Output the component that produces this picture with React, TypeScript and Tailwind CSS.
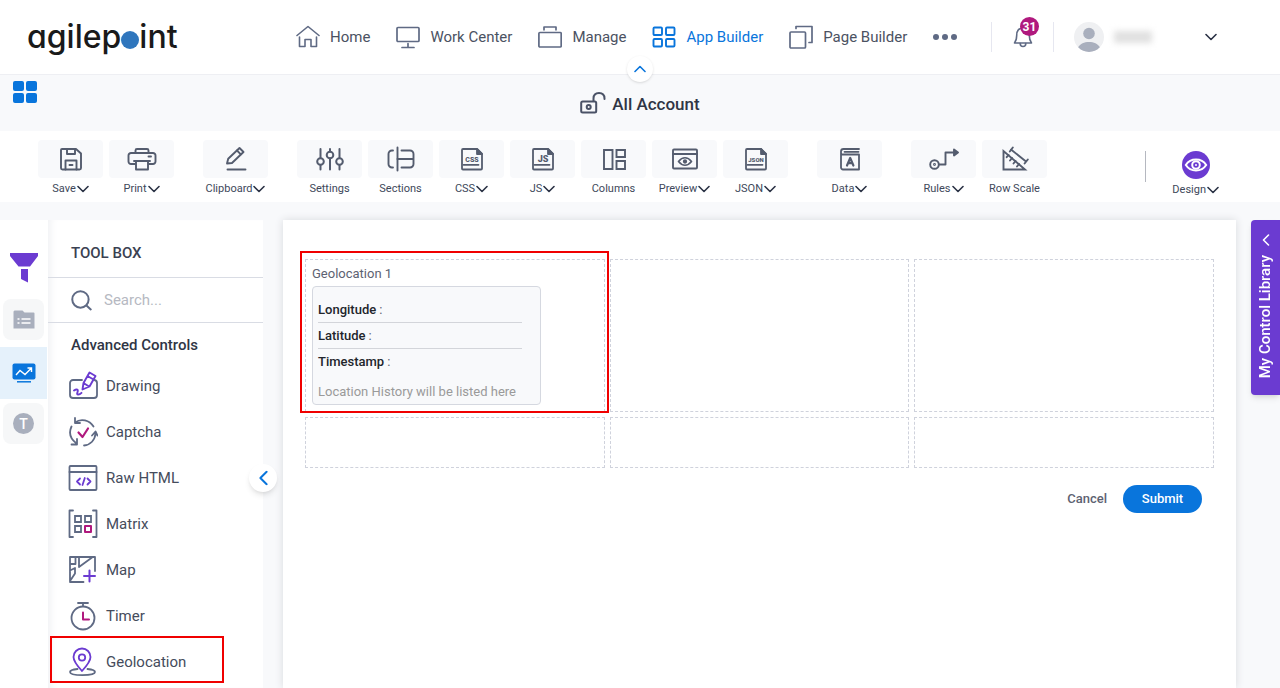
import React from 'react';

interface IconProps {
  className?: string;
}

interface ToolItem {
  label: string;
  icon: React.FC<IconProps>;
  menu?: boolean;
}

interface ControlItem {
  label: string;
  icon: React.FC<IconProps>;
  highlighted?: boolean;
}

const PURPLE = '#6b3bd1';
const PINK = '#b0197e';

// Base wrapper shared by all line icons
const Svg: React.FC<{ size: string; className?: string; width?: number; children: React.ReactNode }> = ({
  size,
  className,
  width = 1.8,
  children,
}) => (
  <svg
    viewBox={size}
    className={className}
    fill="none"
    stroke="currentColor"
    strokeWidth={width}
    strokeLinecap="round"
    strokeLinejoin="round"
    aria-hidden="true"
  >
    {children}
  </svg>
);

/* ---------- Navigation icons ---------- */

const HomeIcon = () => (
  <Svg size="0 0 24 24" className="size-6" width={1.6}>
    <path d="M1 10.5 12 1.5l11 9" />
    <path d="M3.500 12v9.500h5.500v-7h6v7h5.500V12" />
  </Svg>
);

const MonitorIcon = () => (
  <Svg size="0 0 24 24" className="size-6" width={1.7}>
    <rect x="1" y="2.500" width="22" height="14" rx="1" />
    <path d="M12 18.500v4M6 22.500h12" />
  </Svg>
);

const BriefcaseIcon = () => (
  <Svg size="0 0 24 24" className="size-6" width={1.7}>
    <rect x="0.900" y="7.500" width="22.300" height="14.500" rx="1" />
    <path d="M6 4.800V2h12v2.800" />
  </Svg>
);

const AppsIcon = () => (
  <Svg size="0 0 24 24" className="size-6" width={1.9}>
    <rect x="1.500" y="2.500" width="8.500" height="7.500" rx="1" />
    <rect x="14" y="2.500" width="8.500" height="7.500" rx="1" />
    <rect x="1.500" y="14" width="8.500" height="7.500" rx="1" />
    <rect x="14" y="14" width="8.500" height="7.500" rx="1" />
  </Svg>
);

const PagesIcon = () => (
  <Svg size="0 0 24 24" className="size-6" width={1.7}>
    <rect x="1" y="7" width="15.500" height="16" rx="1" />
    <path d="M7 3.500V1.500h16v16h-3" />
  </Svg>
);

const BellIcon = () => (
  <Svg size="0 0 20 22" className="h-[22px] w-5" width={1.6}>
    <path d="M1.500 17h17c-1.600-2-2.200-4-2.200-7.500 0-4.500-2.300-7.500-6.300-7.500S3.700 5 3.700 9.500C3.700 13 3.100 15 1.500 17Z" />
    <path d="M7.200 17.500c0 1.800 1.200 3 2.800 3s2.800-1.200 2.800-3" />
  </Svg>
);

const AvatarIcon = () => (
  <svg viewBox="0 0 30 30" className="size-[30px] rounded-full" aria-hidden="true">
    <rect width="30" height="30" fill="#eff0f2" />
    <circle cx="15" cy="11.500" r="5.800" fill="#a9afbd" />
    <path d="M4 25.500C6.500 21.500 10 20 15 20s8.500 1.500 11 5.500L22 30H8Z" fill="#a9afbd" />
  </svg>
);

const Chevron: React.FC<IconProps> = ({ className }) => (
  <Svg size="0 0 12 8" className={className} width={1.6}>
    <path d="m1 1.500 5 5 5-5" />
  </Svg>
);

const UnlockIcon = () => (
  <Svg size="0 0 26 22" className="h-[22px] w-[26px] text-[#4a5266]" width={2}>
    <rect x="1.200" y="9.500" width="15" height="11" rx="1.500" />
    <circle cx="8.700" cy="15" r="2" />
    <path d="M13.500 9V6.500c0-3.500 2.300-5.500 5.500-5.500s5.500 2 5.500 5.500V7" />
  </Svg>
);

/* ---------- Toolbar icons ---------- */

const SaveIcon = () => (
  <Svg size="0 0 26 26" className="size-[26px]" width={1.9}>
    <path d="M4 3h14l5 4.500V22a1.500 1.500 0 0 1-1.500 1.500h-17A1.500 1.500 0 0 1 3 22V4a1 1 0 0 1 1-1Z" />
    <path d="M9 3v5h8V3M7.500 23.500V14.500h11v9M11.500 19h3" />
  </Svg>
);

const PrintIcon = () => (
  <Svg size="0 0 30 26" className="h-[26px] w-[30px]" width={1.9}>
    <path d="M8.500 7V4.500A1.500 1.500 0 0 1 10 3h10a1.500 1.500 0 0 1 1.500 1.500V7" />
    <path d="M8 18H4a2.500 2.500 0 0 1-2.500-2.500v-6A2.500 2.500 0 0 1 4 7h22a2.500 2.500 0 0 1 2.500 2.500v6A2.500 2.500 0 0 1 26 18h-4" />
    <path d="M7 15h16M9 15v8.500h12V15M21.500 10.500H24" />
  </Svg>
);

const ClipboardIcon = () => (
  <Svg size="0 0 26 26" className="size-[26px]" width={1.9}>
    <path d="m4 17.500 1.200-4.700L16.500 2l4 4L9 17Z" />
    <path d="m14 4.500 3.800 3.800M4.500 23.500h18" />
  </Svg>
);

const SettingsIcon = () => (
  <Svg size="0 0 28 26" className="h-[26px] w-7" width={2}>
    <path d="M4.500 3v9M4.500 19v4.500M14 3v2.500M14 12.500v11M23.500 3v9M23.500 19v4.500" />
    <circle cx="4.500" cy="15.500" r="3.300" />
    <circle cx="14" cy="9" r="3.300" />
    <circle cx="23.500" cy="15.500" r="3.300" />
  </Svg>
);

const SectionsIcon = () => (
  <Svg size="0 0 28 26" className="h-[26px] w-7" width={1.9}>
    <path d="M10.500 1.500v23M6 4.500H5A3.500 3.500 0 0 0 1.500 8v10A3.500 3.500 0 0 0 5 21.500h1" />
    <path d="M14.500 4.500H23A3.500 3.500 0 0 1 26.500 8v10a3.500 3.500 0 0 1-3.500 3.500h-8.500M10.500 13h16" />
  </Svg>
);

const FileShape: React.FC<{ text: string; fontSize: number }> = ({ text, fontSize }) => (
  <Svg size="0 0 26 26" className="size-[26px]" width={1.8}>
    <path d="M4 3h14l5 5v14.500a1 1 0 0 1-1 1H4a1 1 0 0 1-1-1V4a1 1 0 0 1 1-1Z" />
    <path d="M18 3v5h5Z" fill="currentColor" />
    <path d="M4.500 18.800h15" />
    <text
      x="13"
      y="15.500"
      textAnchor="middle"
      fontSize={fontSize}
      fontFamily="Roboto, sans-serif"
      fontWeight="900"
      fill="currentColor"
      stroke="none"
    >
      {text}
    </text>
  </Svg>
);

const CssIcon = () => <FileShape text="CSS" fontSize={7} />;
const JsIcon = () => <FileShape text="JS" fontSize={9} />;
const JsonIcon = () => <FileShape text="JSON" fontSize={6} />;

const ColumnsIcon = () => (
  <Svg size="0 0 26 26" className="size-[26px]" width={1.9}>
    <path d="M3 4h8.500v19H3ZM15.500 4H24v7h-8.500ZM15.500 15H24v8h-8.500Z" strokeLinejoin="miter" />
  </Svg>
);

const PreviewIcon = () => (
  <Svg size="0 0 28 26" className="h-[26px] w-7" width={1.9}>
    <rect x="2" y="3.500" width="24" height="19" rx="1" />
    <path d="M2 8h24" />
    <path d="M7.500 15.500c4-5 9-5 13 0-4 5-9 5-13 0Z" strokeWidth="1.700" />
    <circle cx="14" cy="15.500" r="1.200" fill="currentColor" />
  </Svg>
);

const DataIcon = () => (
  <Svg size="0 0 26 26" className="size-[26px]" width={1.8}>
    <path d="M22 8.500v15H6A2 2 0 0 1 4 21.500V5.500A2.500 2.500 0 0 1 6.500 3H22M5 8.500h17M7.500 5.800h14" />
    <path d="m10 19.500 3.200-7.500 3.200 7.500M11.200 17.200h4" strokeWidth="2.200" />
  </Svg>
);

const RulesIcon = () => (
  <Svg size="0 0 30 26" className="h-[26px] w-[30px]" width={1.9}>
    <circle cx="5.500" cy="18.500" r="4.300" />
    <circle cx="5.500" cy="18.500" r="0.500" />
    <path d="M10 18.500h6.500V6.500H24" />
    <path d="m25 3.500 4 3-4 3Z" fill="currentColor" />
  </Svg>
);

const RowScaleIcon = () => (
  <Svg size="0 0 28 26" className="h-[26px] w-7" width={1.9}>
    <path d="M2.500 5v18.500H24Z" strokeLinejoin="miter" />
    <path d="m7.500 9-1.800 2.200M11 12l-2 2.500M14.500 15l-2 2.500M18 18l-2 2.500" />
    <path d="m10 3.500 15 12M11.800 1.500l-3 4M26.800 13.500l-3.200 4" />
  </Svg>
);

const DesignIcon = () => (
  <svg viewBox="0 0 28 28" className="size-7" aria-hidden="true" fill="none">
    <circle cx="14" cy="14" r="14" fill={PURPLE} />
    <path d="M3.800 14C8.500 6.800 19.500 6.800 24.200 14 19.500 21.200 8.500 21.200 3.800 14Z" stroke="#fff" strokeWidth="2" />
    <circle cx="14" cy="14" r="3.800" stroke="#fff" strokeWidth="2" />
    <circle cx="14" cy="14" r="1" fill="#fff" />
  </svg>
);

/* ---------- Tool box icons ---------- */

const DrawingIcon = () => (
  <Svg size="0 0 30 30" className="size-[30px]">
    <path d="M14 9H5a3 3 0 0 0-3 3v12a3 3 0 0 0 3 3h21a3 3 0 0 0 3-3V12a3 3 0 0 0-2.500-3" />
    <g stroke={PURPLE} strokeWidth="1.900">
      <path d="m14.500 18.500 1-6.500L21.500 1.500l6 3.500-6 10.500ZM15.500 12l5.500 3.500M19.500 5l6 3.500" />
      <path d="M6 19.500c2-1.500 4-1.500 3.800.5-.2 1.800-1.500 3 .2 3.500 1.500.3 2.500-.7 3.500-1.700" />
    </g>
  </Svg>
);

const CaptchaIcon = () => (
  <Svg size="0 0 30 30" className="size-[30px]">
    <path d="M7 5.500C13 1 21.500 3 25.500 9.500M7 1v5h5" />
    <path d="M3.500 9.500C.5 16 2.500 22 8.500 26.500M9 22v5.500H3.500" />
    <path d="M16 28.500c6.500-.5 11-5.500 11.500-12M24 18.500l3.500-4 2 4" />
    <path d="m10.500 15.500 4 4.500 5.500-8.500" stroke={PINK} strokeWidth="2.200" />
  </Svg>
);

const HtmlIcon = () => (
  <Svg size="0 0 30 30" className="size-[30px]">
    <rect x="1.500" y="3" width="27" height="24" rx="1" />
    <path d="M1.500 9h27" />
    <path d="m12 15.500-3 3 3 3M19.500 15.500l3 3-3 3M16.800 15l-2.300 7" stroke={PURPLE} />
  </Svg>
);

const MatrixIcon = () => (
  <Svg size="0 0 30 30" className="size-[30px]">
    <path d="M5 1.500H1.500v26.500H5M25 1.500h3.500v26.500H25" />
    <path d="M7 7h6v6H7ZM17 7h6v6h-6ZM7 17h6v6H7Z" strokeLinejoin="miter" />
    <path d="M17 17h6v6h-6Z" stroke={PINK} strokeWidth="2" />
  </Svg>
);

const MapIcon = () => (
  <Svg size="0 0 30 30" className="size-[30px]">
    <path d="M15.500 27H2V2h25v14M2 9h5.500V2M2 15.500l5-2.500v5.500L2 26M11 2v10L24 2.500" />
    <path d="M21.500 15.500v11M16 21h11" stroke={PURPLE} strokeWidth="2" />
  </Svg>
);

const TimerIcon = () => (
  <Svg size="0 0 30 30" className="size-[30px]">
    <circle cx="15" cy="17" r="11.500" />
    <path d="M10 2h10M15 2v3" />
    <path d="M15 11.500V18.500h6" stroke={PINK} strokeWidth="2" />
  </Svg>
);

const GeoIcon = () => (
  <Svg size="0 0 30 30" className="size-[30px]">
    <path d="M9.500 22C4.500 22.500 2 23.500 2 25c0 2 5 3.200 12.500 3.200S27 27 27 25c0-1.500-2.500-2.500-7.500-3" />
    <g stroke={PURPLE}>
      <path d="M14 24C8.500 18 5.500 14 5.500 10a8.500 8.500 0 0 1 17 0c0 4-3 8-8.500 14Z" />
      <circle cx="14" cy="10.500" r="3.200" />
    </g>
  </Svg>
);

/* ---------- Data ---------- */

const NAV_ITEMS = [
  { label: 'Home', icon: HomeIcon },
  { label: 'Work Center', icon: MonitorIcon },
  { label: 'Manage', icon: BriefcaseIcon },
  { label: 'App Builder', icon: AppsIcon, active: true },
  { label: 'Page Builder', icon: PagesIcon },
];

const TOOL_GROUPS: ToolItem[][] = [
  [
    { label: 'Save', icon: SaveIcon, menu: true },
    { label: 'Print', icon: PrintIcon, menu: true },
  ],
  [{ label: 'Clipboard', icon: ClipboardIcon, menu: true }],
  [
    { label: 'Settings', icon: SettingsIcon },
    { label: 'Sections', icon: SectionsIcon },
    { label: 'CSS', icon: CssIcon, menu: true },
    { label: 'JS', icon: JsIcon, menu: true },
    { label: 'Columns', icon: ColumnsIcon },
    { label: 'Preview', icon: PreviewIcon, menu: true },
    { label: 'JSON', icon: JsonIcon, menu: true },
  ],
  [{ label: 'Data', icon: DataIcon, menu: true }],
  [
    { label: 'Rules', icon: RulesIcon, menu: true },
    { label: 'Row Scale', icon: RowScaleIcon },
  ],
];

const CONTROLS: ControlItem[] = [
  { label: 'Drawing', icon: DrawingIcon },
  { label: 'Captcha', icon: CaptchaIcon },
  { label: 'Raw HTML', icon: HtmlIcon },
  { label: 'Matrix', icon: MatrixIcon },
  { label: 'Map', icon: MapIcon },
  { label: 'Timer', icon: TimerIcon },
  { label: 'Geolocation', icon: GeoIcon, highlighted: true },
];

const GEO_FIELDS = ['Longitude', 'Latitude', 'Timestamp'];

/* ---------- Sections ---------- */

const Header = () => (
  <header className="relative flex h-[75px] shrink-0 items-center border-b border-[#eeeff3] bg-white pr-[63px] pl-[27px]">
    <a
      href="#"
      className="flex w-[269px] shrink-0 items-center font-[Inter,sans-serif] text-[32px] leading-10 font-medium text-[#1a1a1a] [font-feature-settings:'cv11']"
    >
      agilep
      <span className="mt-[6px] size-[18px] rounded-full bg-[#2f76bd]" />
      int
    </a>
    <nav className="flex items-center gap-[26px]">
      {NAV_ITEMS.map((item) => (
        <a
          key={item.label}
          href="#"
          className={`flex items-center gap-[10px] whitespace-nowrap ${item.active ? 'text-[#0975dc]' : 'text-[#5f6a84]'}`}
        >
          <item.icon />
          <span className={item.active ? '' : 'text-[#4b5262]'}>{item.label}</span>
        </a>
      ))}
      <button aria-label="More" className="flex gap-[3px] text-[#5f6a84]">
        <span className="size-[6px] rounded-full bg-current" />
        <span className="size-[6px] rounded-full bg-current" />
        <span className="size-[6px] rounded-full bg-current" />
      </button>
    </nav>
    <div className="ml-auto flex items-center">
      <button
        aria-label="Notifications"
        className="relative flex h-[30px] w-[63px] items-center justify-center border-x border-[#e6e7f0] text-[#5f6a84]"
      >
        <BellIcon />
        <span className="absolute -top-[5px] left-7 flex size-[19px] items-center justify-center rounded-full bg-[#b0197e] text-xs font-bold text-white">
          31
        </span>
      </button>
      <button aria-label="Account menu" className="ml-5 flex items-center text-[#2b3245]">
        <AvatarIcon />
        <span className="ml-[10px] h-3 w-[38px] bg-[#e0e0e0] blur-[3px]" />
        <Chevron className="ml-[53px] h-2 w-3" />
      </button>
    </div>
    <button
      aria-label="Collapse header"
      className="absolute -bottom-2 left-1/2 z-10 flex size-[26px] -translate-x-1/2 items-center justify-center rounded-full bg-white text-[#0975dc] shadow-sm"
    >
      <Chevron className="h-2 w-3 rotate-180" />
    </button>
  </header>
);

const TitleBar = () => (
  <div className="grid h-14 shrink-0 grid-cols-3 px-[13px]">
    <button aria-label="Applications" className="mt-[6px] grid w-6 grid-cols-2 gap-[2px] self-start">
      <span className="h-[10px] rounded-xs bg-[#0975dc]" />
      <span className="h-[10px] rounded-xs bg-[#0975dc]" />
      <span className="h-[10px] rounded-xs bg-[#0975dc]" />
      <span className="h-[10px] rounded-xs bg-[#0975dc]" />
    </button>
    <h1 className="flex items-center justify-center gap-[6px] text-[17px] font-medium text-[#2f3545]">
      <UnlockIcon />
      <span className="pt-1">All Account</span>
    </h1>
  </div>
);

const ToolLabel: React.FC<{ label: string; menu?: boolean }> = ({ label, menu }) => (
  <span className="flex items-center gap-px text-[11px] leading-4 whitespace-nowrap text-[#40485a]">
    {label}
    {menu && <Chevron className="h-2 w-3 text-[#2b3245]" />}
  </span>
);

const Toolbar = () => (
  <div className="flex h-[71px] shrink-0 items-start bg-white pt-[9px] pr-[61px] pl-[38px]">
    <div className="flex gap-[29px]">
      {TOOL_GROUPS.map((group) => (
        <div key={group[0].label} className="flex gap-[6px]">
          {group.map((tool) => (
            <button key={tool.label} className="flex w-[65px] flex-col items-center gap-[3px]">
              <span className="flex h-[38px] w-full items-center justify-center rounded bg-[#f8f9fb] text-[#545c6e]">
                <tool.icon />
              </span>
              <ToolLabel label={tool.label} menu={tool.menu} />
            </button>
          ))}
        </div>
      ))}
    </div>
    <div className="mt-[11px] ml-auto flex items-start">
      <span className="h-[31px] w-px bg-[#b5b8c0]" />
      <button className="ml-[26px] flex flex-col items-center gap-[3px]">
        <DesignIcon />
        <ToolLabel label="Design" menu />
      </button>
    </div>
  </div>
);

const SideStrip = () => (
  <div className="flex w-12 shrink-0 flex-col items-center bg-white pt-[33px] pr-px">
    <button aria-label="Filter">
      <svg viewBox="0 0 28 30" className="h-[30px] w-7" fill={PURPLE} aria-hidden="true">
        <path d="M0 0h28v3l-8 10.500H8.500L0 3ZM11 16h7v13.500L11 26Z" />
      </svg>
    </button>
    <button aria-label="Form controls" className="mt-4 flex size-[41px] items-center justify-center rounded-lg bg-[#f6f7f8]">
      <svg viewBox="0 0 22 20" className="h-5 w-[22px]" aria-hidden="true">
        <path d="M1.500 0.500h8l2 2h9a1 1 0 0 1 1 1v15h-21V1.500Z" fill="#a9afbd" />
        <path d="M8.500 9h9M8.500 13h9M4.500 9h2M4.500 13h2" stroke="#fff" strokeWidth="1.500" />
      </svg>
    </button>
    <button aria-label="Advanced controls" className="mt-[7px] flex h-[52px] w-full items-center justify-center bg-[#e5f1fb]">
      <svg viewBox="0 0 24 20" className="h-5 w-6" fill="none" stroke="#fff" aria-hidden="true">
        <rect x="0.500" y="0.500" width="23" height="16" rx="2" fill="#0975dc" stroke="none" />
        <path d="m4 12 4-4.500 5 4L19.500 5M15.500 5h4v4" strokeWidth="1.400" />
        <path d="M5 18.800h14" stroke="#0975dc" strokeWidth="1.500" />
      </svg>
    </button>
    <button aria-label="Text controls" className="mt-1 flex size-[41px] items-center justify-center rounded-lg bg-[#f6f7f8]">
      <span className="flex size-[21px] items-center justify-center rounded-full bg-[#a9afbd] text-sm font-medium text-white">
        T
      </span>
    </button>
  </div>
);

const ToolBox = () => (
  <aside className="relative flex w-[215px] shrink-0 flex-col bg-white shadow-[inset_8px_0_8px_-6px_#eeeff2]">
    <h2 className="flex h-[58px] items-center border-b border-[#d9dce4] pt-[9px] pl-[23px] text-[15px] font-medium text-[#3a4152]">
      TOOL BOX
    </h2>
    <label className="flex h-[45px] items-center gap-3 border-b border-[#d9dce4] pl-[23px] text-[#5f6a84]">
      <Svg size="0 0 20 20" className="size-[21px]" width={1.9}>
        <circle cx="9" cy="9" r="7.800" />
        <path d="m15 15 3.800 3.500" />
      </Svg>
      <input
        type="search"
        aria-label="Search controls"
        placeholder="Search..."
        className="w-32 text-[15px] outline-none placeholder:text-[#b6b9c2]"
      />
    </label>
    <h3 className="mt-[10px] pl-[23px] text-[15px] leading-6 font-medium text-[#2f3545]">Advanced Controls</h3>
    <ul className="mt-[6px]">
      {CONTROLS.map((control) => (
        <li key={control.label} className="relative">
          <button className="flex h-[46px] w-full items-center gap-2 pl-5 text-[#5f6a84]">
            <control.icon />
            <span className="text-[15px] text-[#454c5c]">{control.label}</span>
          </button>
          {control.highlighted && (
            <span className="pointer-events-none absolute -top-[3px] bottom-[2px] left-[2px] w-[174px] border-2 border-[#f00000]" />
          )}
        </li>
      ))}
    </ul>
    <button
      aria-label="Collapse tool box"
      className="absolute top-[244px] -right-[14px] z-10 flex size-7 items-center justify-center rounded-full bg-white text-[#0975dc] shadow-md"
    >
      <Chevron className="h-[10px] w-[15px] rotate-90" />
    </button>
  </aside>
);

const GeolocationControl = () => (
  <div className="pt-[5px] pl-[6px] text-[13px] leading-[18px] text-[#5d6272]">
    <p>Geolocation 1</p>
    <div className="mt-[3px] flex h-[119px] w-[229px] flex-col rounded border border-[#d5d8e0] bg-[#f8f9fb] px-[5px] pt-[10px]">
      <dl className="w-[204px] divide-y divide-[#d3d5da]">
        {GEO_FIELDS.map((field) => (
          <div key={field} className="flex h-[26px] items-center gap-[3px]">
            <dt className="font-medium text-[#22252b]">{field}</dt>
            <dd>:</dd>
          </div>
        ))}
      </dl>
      <p className="mt-2 text-[#9a9a9a]">Location History will be listed here</p>
    </div>
  </div>
);

const FormCanvas = () => (
  <main className="ml-5 min-w-0 flex-1 bg-white px-[22px] pt-[39px] shadow-[0_0_8px_#d8dade]">
    <div className="grid grid-cols-3 gap-[5px]">
      <div className="relative h-[153px] border border-dashed border-[#cfd2dc]">
        <GeolocationControl />
        <span className="pointer-events-none absolute -top-[9px] -right-[5px] -bottom-[2px] -left-[6px] border-2 border-[#f00000]" />
      </div>
      <div className="border border-dashed border-[#cfd2dc]" />
      <div className="border border-dashed border-[#cfd2dc]" />
      <div className="h-[51px] border border-dashed border-[#cfd2dc]" />
      <div className="border border-dashed border-[#cfd2dc]" />
      <div className="border border-dashed border-[#cfd2dc]" />
    </div>
    <div className="mt-[17px] flex items-center justify-end gap-4 pr-3 text-[13px] font-medium">
      <button className="text-[#5d6272]">Cancel</button>
      <button className="h-7 w-[79px] rounded-full bg-[#0975dc] text-white">Submit</button>
    </div>
  </main>
);

const App: React.FC = () => (
  <div className="flex h-screen flex-col overflow-hidden bg-[#f8f9fb] font-[Roboto,sans-serif] text-[15px] text-[#4b5262]">
    <Header />
    <TitleBar />
    <Toolbar />
    <div className="flex min-h-0 flex-1 pt-[18px]">
      <SideStrip />
      <ToolBox />
      <FormCanvas />
      <button className="ml-[15px] flex h-[175px] w-[29px] shrink-0 flex-col items-center gap-[10px] rounded-l bg-[#6b3bd1] pt-[15px] text-[15px] font-medium text-white shadow-md">
        <Chevron className="h-[10px] w-3 rotate-90" />
        <span className="rotate-180 whitespace-nowrap [writing-mode:vertical-rl]">My Control Library</span>
      </button>
    </div>
  </div>
);

export default App;
